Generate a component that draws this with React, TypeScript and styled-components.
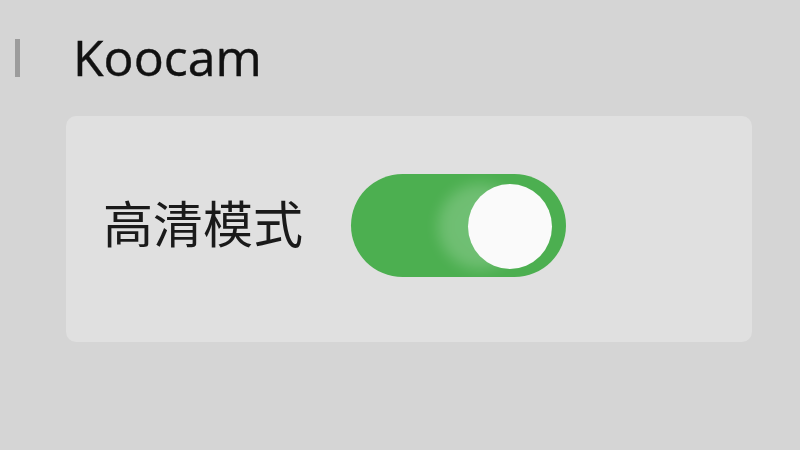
import React, { useState } from 'react';
import styled, { createGlobalStyle } from 'styled-components';

const GlobalStyle = createGlobalStyle`
  html, body {
    margin: 0;
    padding: 0;
    background: #d5d5d5;
  }
  body {
    font-family: "Open Sans", "Noto Sans CJK SC", sans-serif;
    color: #1c1c1c;
  }
`;

const App = () => {
  const [hd, setHd] = useState<boolean>(true);

  return (
    <>
      <GlobalStyle />
      <Page>
        <Header>
          <SideMark />
          <Title>Koocam</Title>
        </Header>
        <Card>
          <SettingRow>
            <Label>高清模式</Label>
            <Toggle on={hd} onClick={() => setHd(prev => !prev)}>
              <Knob on={hd} />
            </Toggle>
          </SettingRow>
        </Card>
      </Page>
    </>
  );
};

const Page = styled.div`
  width: 800px;
  height: 450px;
  box-sizing: border-box;
  padding-top: 20px;
  overflow: hidden;
`

const Header = styled.div`
  display: flex;
  align-items: center;
  height: 74px;
  padding-left: 15px;
  gap: 53px;
`

const SideMark = styled.div`
  width: 5px;
  height: 38px;
  margin-top: 2px;
  background: #9c9c9c;
`

const Title = styled.h1`
  margin: 0;
  font-family: "Open Sans", sans-serif;
  font-weight: 400;
  font-size: 50px;
  line-height: 1;
  color: #111;
  -webkit-text-stroke: 0.4px #111;
`

const Card = styled.div`
  margin: 22px 0 0 66px;
  width: 686px;
  height: 226px;
  border-radius: 10px;
  background: #e0e0e0;
  display: flex;
  align-items: center;
  padding: 0 0 8px 37px;
  box-sizing: border-box;
`

const SettingRow = styled.div`
  display: flex;
  align-items: center;
  gap: 48px;
`

const Label = styled.span`
  font-family: "Noto Sans CJK SC", sans-serif;
  font-size: 50px;
  line-height: 1;
  margin-bottom: 8px;
  color: #1a1a1a;
`

const Toggle = styled.div<{ on: boolean }>`
  position: relative;
  width: 215px;
  height: 103px;
  border-radius: 52px;
  background: ${(p) => (p.on ? '#4caf50' : '#bdbdbd')};
  overflow: hidden;
  cursor: pointer;
`

const Knob = styled.div<{ on: boolean }>`
  position: absolute;
  top: 10px;
  left: ${(p) => (p.on ? '117px' : '12px')};
  width: 84px;
  height: 85px;
  border-radius: 50%;
  background: #fafafa;
  box-shadow: -30px 0 14px rgba(255, 255, 255, 0.2);
`

export default App;
